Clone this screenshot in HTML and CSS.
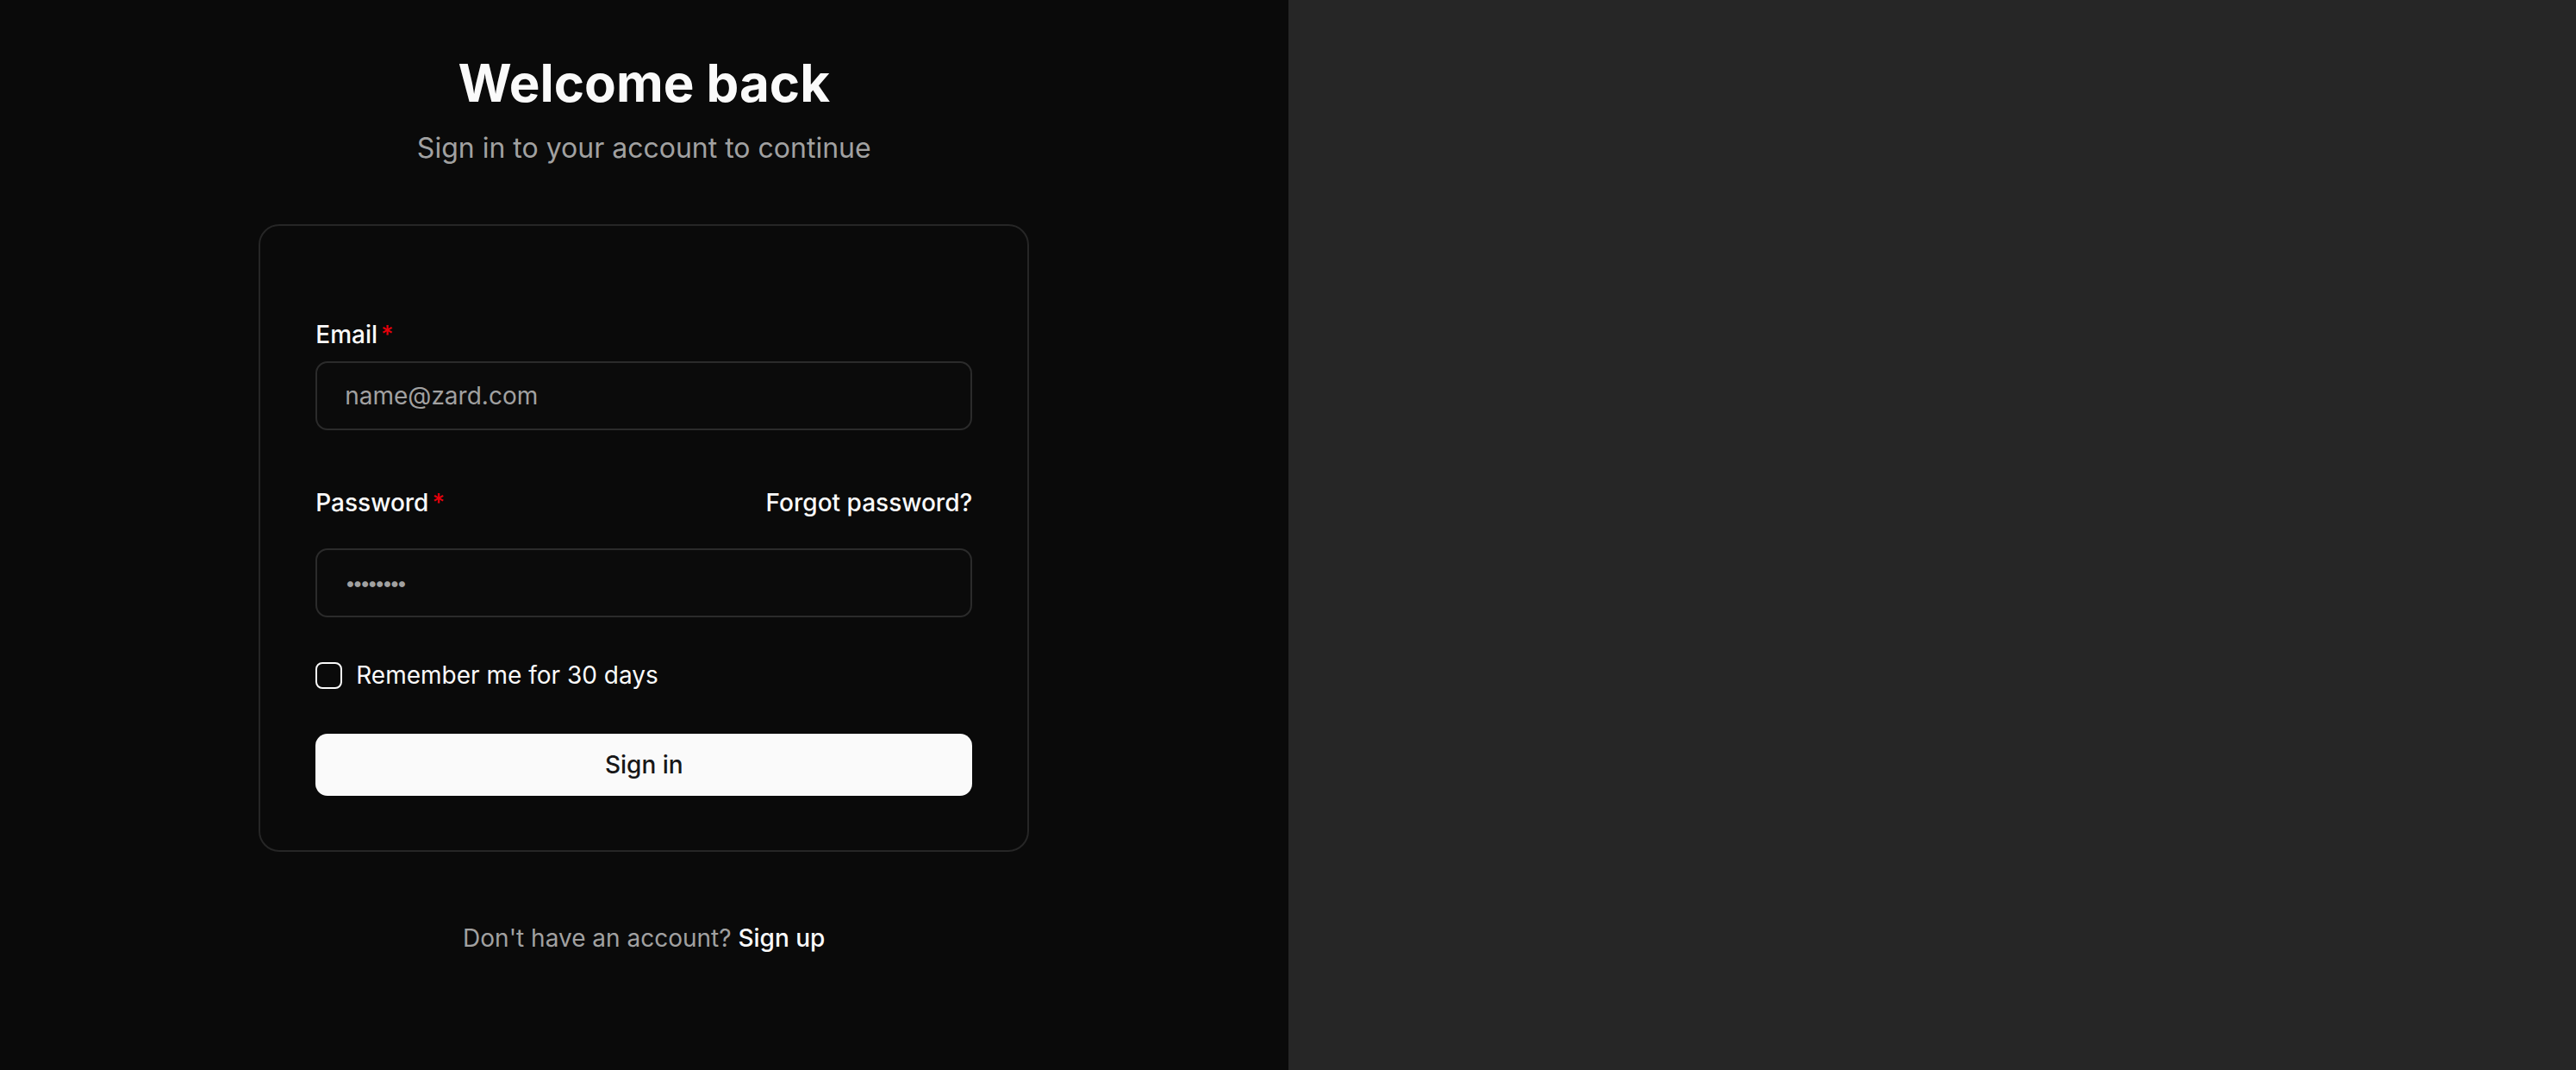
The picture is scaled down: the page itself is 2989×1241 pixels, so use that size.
FILE: index.html
```html
<!DOCTYPE html>
<html lang="en">
<head>
<meta charset="utf-8">
<title>Sign in</title>
<link rel="stylesheet" href="styles.css">
</head>
<body>
<main class="split">
  <section class="auth-panel">
    <header class="auth-head">
      <h1 class="auth-title">Welcome back</h1>
      <p class="auth-sub">Sign in to your account to continue</p>
    </header>
    <form class="card">
      <div class="field">
        <label class="label" for="email">Email<span class="req">*</span></label>
        <input class="input" id="email" type="email" placeholder="name@zard.com">
      </div>
      <div class="field field-pass">
        <div class="label-row">
          <label class="label" for="password">Password<span class="req">*</span></label>
          <a class="link" href="#">Forgot password?</a>
        </div>
        <input class="input input-pass" id="password" type="password" placeholder="••••••••">
      </div>
      <label class="check-row">
        <input class="checkbox" type="checkbox">
        <span>Remember me for 30 days</span>
      </label>
      <button class="btn" type="button">Sign in</button>
    </form>
    <p class="auth-foot">Don't have an account? <a class="foot-link" href="#">Sign up</a></p>
  </section>
  <aside class="side-panel"></aside>
</main>
</body>
</html>
```

FILE: styles.css
```css
* { box-sizing: border-box; }
html, body { margin: 0; padding: 0; }
body {
  font-family: Inter, "Noto Sans", "Liberation Sans", sans-serif;
  color: #fafafa;
  background: #0a0a0a;
}
.split {
  display: grid;
  grid-template-columns: 1fr 1fr;
  height: 1241px;
}
.auth-panel {
  background: #0a0a0a;
  display: flex;
  flex-direction: column;
  align-items: center;
  padding-top: 60px;
}
.side-panel { background: #262626; }
.auth-head { text-align: center; }
.auth-title {
  margin: 0;
  font-size: 60px;
  line-height: 72px;
  font-weight: 700;
  letter-spacing: 0;
  color: #fafafa;
}
.auth-sub {
  margin: 16px 0 0;
  font-size: 32px;
  line-height: 48px;
  color: #a1a1a1;
}
.card {
  margin-top: 64px;
  width: 894px;
  border: 2px solid #262626;
  border-radius: 24px;
  padding: 112px 64px 63px;
  display: flex;
  flex-direction: column;
}
.field { display: flex; flex-direction: column; }
.label {
  font-size: 28px;
  line-height: 28px;
  font-weight: 500;
  color: #fafafa;
}
.req { color: #e7000b; margin-left: 4px; }
.input {
  margin-top: 17px;
  height: 80px;
  width: 100%;
  border: 2px solid #2b2b2b;
  border-radius: 14px;
  background: #0b0b0b;
  padding: 0 32px;
  font-family: inherit;
  font-size: 28px;
  color: #fafafa;
  outline: none;
}
.input::placeholder { color: #a1a1a1; }
.field-pass { margin-top: 70px; }
.label-row {
  display: flex;
  justify-content: space-between;
  align-items: center;
}
.link {
  font-size: 28px;
  line-height: 28px;
  font-weight: 500;
  color: #fafafa;
  text-decoration: none;
}
.input-pass {
  margin-top: 39px;
  font-size: 22px;
  letter-spacing: -3.8px;
}
.check-row {
  margin-top: 51px;
  display: flex;
  align-items: center;
  gap: 16px;
  font-size: 28px;
  line-height: 32px;
  color: #fafafa;
}
.checkbox {
  appearance: none;
  margin: 0;
  width: 31px;
  height: 31px;
  border: 2px solid #fafafa;
  border-radius: 8px;
  background: transparent;
}
.btn {
  margin-top: 52px;
  height: 72px;
  width: 100%;
  border: 0;
  border-radius: 14px;
  background: #fafafa;
  color: #171717;
  font-family: inherit;
  font-size: 28px;
  font-weight: 500;
}
.auth-foot {
  margin: 80px 0 0;
  font-size: 28px;
  line-height: 40px;
  color: #a1a1a1;
}
.foot-link {
  color: #fafafa;
  font-weight: 500;
  text-decoration: none;
}
```
